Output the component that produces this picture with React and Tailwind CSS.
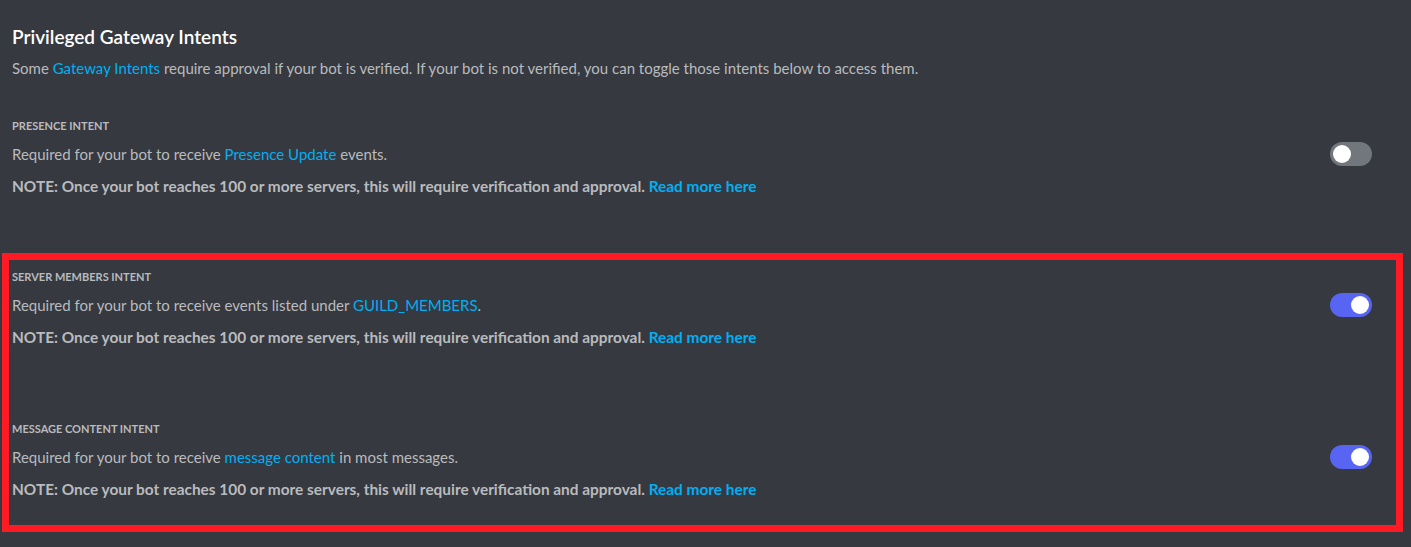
const intents = [
  {
    label: "PRESENCE INTENT",
    before: "Required for your bot to receive ",
    link: "Presence Update",
    after: " events.",
    on: false,
  },
  {
    label: "SERVER MEMBERS INTENT",
    before: "Required for your bot to receive events listed under ",
    link: "GUILD_MEMBERS",
    after: ".",
    on: true,
  },
  {
    label: "MESSAGE CONTENT INTENT",
    before: "Required for your bot to receive ",
    link: "message content",
    after: " in most messages.",
    on: true,
  },
];

function Toggle({ on }) {
  return (
    <div
      className={
        on
          ? "w-[42px] h-[24px] rounded-full bg-[#5865f2] flex items-center justify-end px-[3px]"
          : "w-[42px] h-[24px] rounded-full bg-[#72767d] flex items-center justify-start px-[3px]"
      }
    >
      <div className="w-[18px] h-[18px] rounded-full bg-white" />
    </div>
  );
}

function IntentRow({ intent }) {
  return (
    <div className="flex items-start">
      <div className="flex-1">
        <div className="h-[24px] flex items-center text-[11px] font-bold text-[#b9bbbe]">
          {intent.label}
        </div>
        <div className="h-[32px] flex items-center text-[15px] text-[#b9bbbe]">
          <span>
            {intent.before}
            <span className="text-[#00aff4]">{intent.link}</span>
            {intent.after}
          </span>
        </div>
        <div className="h-[34px] flex items-center text-[15.4px] font-bold text-[#b9bbbe]">
          <span>
            NOTE: Once your bot reaches 100 or more servers, this will require verification and approval.{" "}
            <span className="text-[#00aff4]">Read more here</span>
          </span>
        </div>
      </div>
      <div className="mt-[28px]">
        <Toggle on={intent.on} />
      </div>
    </div>
  );
}

export default function App() {
  return (
    <div
      className="w-[1411px] h-[547px] bg-[#36393f] overflow-hidden"
      style={{ fontFamily: "Lato, 'Noto Sans', sans-serif" }}
    >
      <div className="pl-[12px] pr-[39px] pt-[24px]">
        <div className="h-[26px] flex items-center text-[19px] font-semibold text-white">
          Privileged Gateway Intents
        </div>
        <div className="mt-[6px] h-[24px] flex items-center text-[15px] text-[#b9bbbe]">
          <span>
            Some <span className="text-[#00aff4]">Gateway Intents</span> require approval if your bot is verified. If your bot is not verified, you can toggle those intents below to access them.
          </span>
        </div>
        <div className="mt-[34px]">
          <IntentRow intent={intents[0]} />
        </div>
      </div>
      <div className="mt-[49px] ml-[2px] w-[1401px] border-[7px] border-[#ff1a24] pl-[3px] pr-[24px] pt-[5px] pb-[18px] flex flex-col gap-[62px]">
        <IntentRow intent={intents[1]} />
        <IntentRow intent={intents[2]} />
      </div>
    </div>
  );
}
